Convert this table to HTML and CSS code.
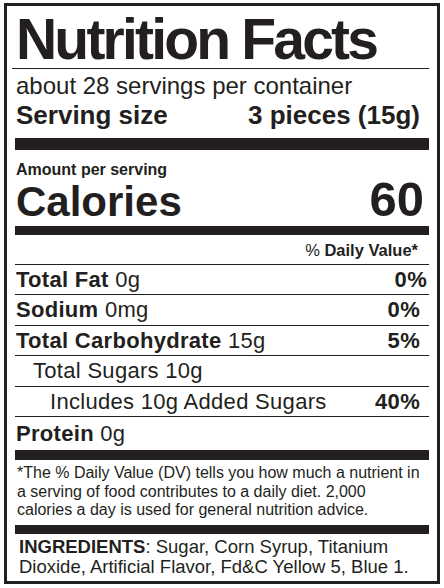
FILE: index.html
```html
<!DOCTYPE html>
<html lang="en">
<head>
<meta charset="utf-8">
<title>Nutrition Facts</title>
<link rel="stylesheet" href="styles.css">
</head>
<body>
<section class="label">
  <h1 class="title">Nutrition Facts</h1>
  <div class="servings">
    <p class="per-container">about 28 servings per container</p>
    <p class="serving-size"><span>Serving size</span><span>3 pieces (15g)</span></p>
  </div>
  <div class="calories-block">
    <p class="amount">Amount per serving</p>
    <p class="calories"><span class="cal-label">Calories</span><span class="cal-value">60</span></p>
  </div>
  <p class="dv-head"><span class="pct-sign">%</span> Daily Value*</p>
  <ul class="nutrients">
    <li class="row"><span><b>Total Fat</b> 0g</span><b class="pct pct-fat">0%</b></li>
    <li class="row"><span><b>Sodium</b> 0mg</span><b class="pct">0%</b></li>
    <li class="row"><span><b>Total Carbohydrate</b> 15g</span><b class="pct">5%</b></li>
    <li class="row sub"><span>Total Sugars 10g</span></li>
    <li class="row subsub"><span>Includes 10g Added Sugars</span><b class="pct">40%</b></li>
    <li class="row last"><span><b>Protein</b> 0g</span></li>
  </ul>
  <p class="footnote">*The % Daily Value (DV) tells you how much a nutrient in a serving of food contributes to a daily diet. 2,000 calories a day is used for general nutrition advice.</p>
  <p class="ingredients"><b>INGREDIENTS</b>: Sugar, Corn Syrup, Titanium Dioxide, Artificial Flavor, Fd&amp;C Yellow 5, Blue 1.</p>
</section>
</body>
</html>
```

FILE: styles.css
```css
* { box-sizing: border-box; }
html, body { margin: 0; padding: 0; background: #fff; }
body {
  font-family: "Liberation Sans", Arial, Helvetica, sans-serif;
  color: #231f20;
}
p, h1, ul { margin: 0; padding: 0; }
ul { list-style: none; }
b { font-weight: 700; }

.label {
  margin: 3px 0 0 4px;
  width: 436px;
  height: 581px;
  border: 3px solid #231f20;
  padding: 0 8px;
}

.title {
  font-size: 57px;
  line-height: 57px;
  font-weight: 700;
  letter-spacing: -2.8px;
  padding: 5px 0 0 4px;
  margin-left: -3px;
  border-bottom: 1px solid #231f20;
  white-space: nowrap;
}

.servings {
  padding-top: 5px;
  padding-bottom: 10px;
  border-bottom: 12px solid #231f20;
}
.per-container {
  font-size: 24px;
  line-height: 24px;
  padding-left: 1px;
}
.serving-size {
  margin-top: 4px;
  display: flex;
  justify-content: space-between;
  font-size: 26px;
  line-height: 26px;
  font-weight: 700;
  padding: 0 9px 0 1px;
}

.calories-block {
  padding-top: 11px;
  border-bottom: 9px solid #231f20;
  padding-bottom: 4px;
}
.amount {
  font-size: 16px;
  line-height: 18px;
  font-weight: 700;
  padding-left: 1px;
}
.calories {
  display: flex;
  justify-content: space-between;
  align-items: baseline;
  line-height: 40px;
  font-weight: 700;
  padding: 0 5px 0 1px;
}
.cal-label { font-size: 42px; }
.cal-value { font-size: 49px; }

.dv-head {
  text-align: right;
  font-size: 16.5px;
  line-height: 18px;
  font-weight: 700;
  padding: 6px 11px 5px 0;
  border-bottom: 1px solid #231f20;
}
.pct-sign { font-weight: 400; }

.row {
  display: flex;
  justify-content: space-between;
  font-size: 22px;
  letter-spacing: 0.3px;
  line-height: 29.4px;
  border-bottom: 1px solid #231f20;
  padding: 0 9px 0 1px;
}
.pct-fat { margin-right: -7px; }
.row.sub { padding-left: 18px; }
.row.subsub { padding-left: 35px; }
.row.last {
  border-bottom: 10px solid #231f20;
  line-height: 33px;
}

.footnote {
  font-size: 16px;
  line-height: 18.5px;
  padding: 4px 8px 5px 2px;
  border-bottom: 9px solid #231f20;
}

.ingredients {
  font-size: 18.5px;
  line-height: 20px;
  padding: 3px 20px 0 4px;
}
```
